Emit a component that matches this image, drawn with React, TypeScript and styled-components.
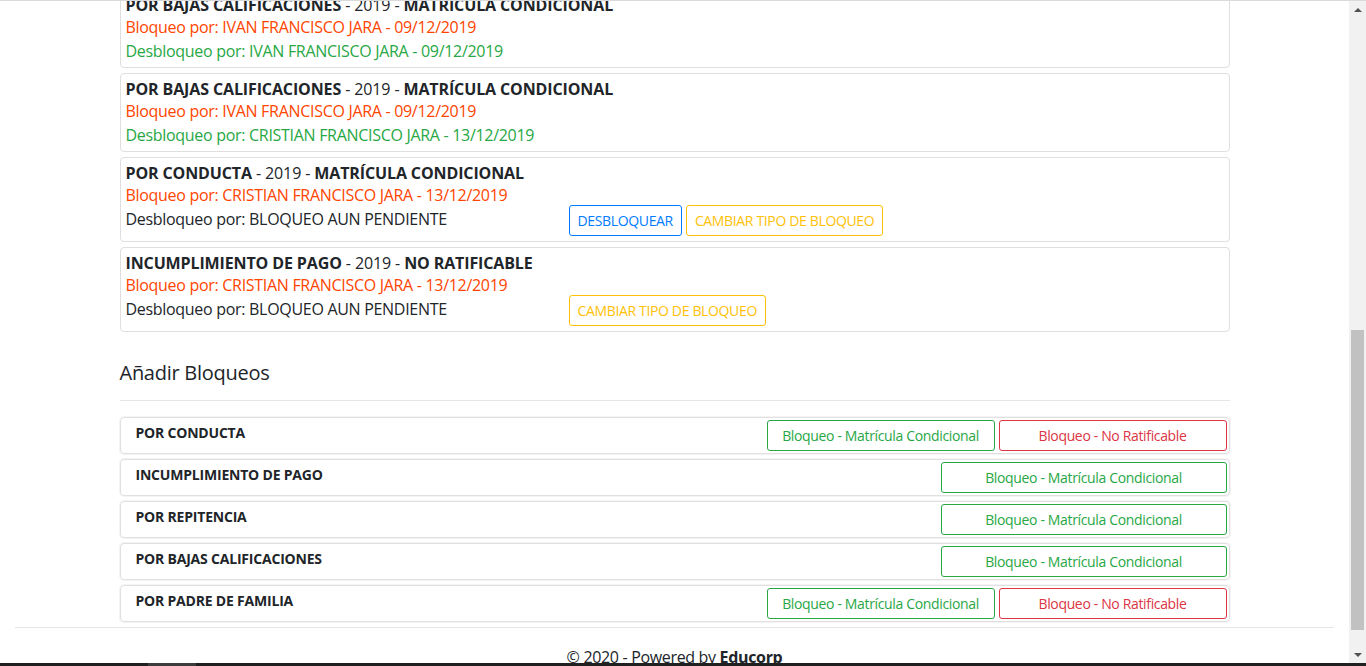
import React from 'react';
import styled, { createGlobalStyle } from 'styled-components';

const FONT = '"Open Sans", "Noto Sans", "DejaVu Sans", sans-serif';

const COLORS = {
    text: '#212529',
    red: '#ff4500',
    green: '#28a745',
    border: '#dfdfdf',
};

const BUTTON_COLORS = {
    primary: '#007bff',
    warning: '#ffc107',
    success: '#28a745',
    danger: '#dc3545',
};

type Variant = keyof typeof BUTTON_COLORS;

const GlobalStyle = createGlobalStyle`
    html, body {
        margin: 0;
        padding: 0;
        overflow: hidden;
        background: #fff;
    }
    body {
        font-family: ${FONT};
        font-size: 16px;
        line-height: 1.5;
        letter-spacing: -0.3px;
        color: ${COLORS.text};
    }
    * {
        box-sizing: border-box;
    }
`;

const Screen = styled.div`
    display: flex;
    flex-direction: column;
    height: 666px;
    overflow: hidden;
`;

const Viewport = styled.div`
    flex: 1;
    display: flex;
    min-height: 0;
    border-top: 1px solid #dadada;
`;

const Page = styled.div`
    flex: 1;
    min-width: 0;
    overflow: hidden;
`;

// page is scrolled: first card starts above the fold
const Scrolled = styled.div`
    margin-top: -12px;
`;

const Container = styled.div`
    max-width: 1140px;
    margin: 0 auto;
    padding: 0 15px;
`;

const Card = styled.div`
    border: 1px solid ${COLORS.border};
    border-radius: 4px;
    padding: 5px 5px 4px;
    margin-bottom: 5px;
`;

const Title = styled.div`
    line-height: 20px;
    font-size: 16px;
    letter-spacing: -0.12px;
    text-transform: uppercase;

    b {
        font-weight: 700;
    }
`;

const Line = styled.div<{ tone?: 'red' | 'green' }>`
    line-height: 24px;
    color: ${props => (props.tone ? COLORS[props.tone] : COLORS.text)};
`;

const ActionRow = styled.div`
    display: grid;
    grid-template-columns: 443px 1fr;
    align-items: start;
`;

const ButtonGroup = styled.div<{ offset?: boolean }>`
    display: flex;
    gap: 4px;
    margin: ${props => (props.offset ? '-2px 0 1px' : '0')};
`;

const Button = styled.button<{ variant: Variant; width?: number }>`
    font-family: ${FONT};
    font-size: 14px;
    line-height: 21px;
    letter-spacing: -0.35px;
    padding: 4px 8px;
    border: 1px solid ${props => BUTTON_COLORS[props.variant]};
    border-radius: 3px;
    background: transparent;
    color: ${props => BUTTON_COLORS[props.variant]};
    width: ${props => (props.width ? `${props.width}px` : 'auto')};
    text-align: center;
    white-space: nowrap;
    cursor: pointer;
`;

const SectionTitle = styled.h5`
    margin: 29px 0 0;
    font-size: 20px;
    font-weight: 400;
    line-height: 24px;
    letter-spacing: -0.27px;
`;

const Divider = styled.hr`
    margin: 15px 0 16px;
    border: 0;
    border-top: 1px solid #e5e5e5;
`;

const AddRow = styled.div`
    display: flex;
    justify-content: space-between;
    align-items: flex-start;
    border: 1px solid #e0e0e0;
    box-shadow: 0 0 0 1px #f4f4f4;
    border-radius: 4px;
    padding: 2px 2px 2px 15px;
    margin-bottom: 5px;
`;

const AddLabel = styled.div`
    font-size: 14px;
    font-weight: 700;
    line-height: 21px;
    letter-spacing: -0.2px;
    padding-top: 2px;
`;

const Footer = styled.footer`
    margin: 5px 15px 0;
    border-top: 1px solid #e5e5e5;
    padding-top: 17px;
    text-align: center;
    line-height: 24px;
    letter-spacing: -0.33px;

    b {
        font-weight: 700;
    }
`;

const Scrollbar = styled.div`
    width: 17px;
    display: flex;
    flex-direction: column;
    background: #f1f1f1;
`;

const ArrowButton = styled.div<{ dir: 'up' | 'down' }>`
    height: 17px;
    display: flex;
    align-items: center;
    justify-content: center;

    &::before {
        content: '';
        width: 0;
        height: 0;
        border-left: 4px solid transparent;
        border-right: 4px solid transparent;
        ${props =>
            props.dir === 'up'
                ? 'border-bottom: 4px solid #505050;'
                : 'border-top: 4px solid #505050;'}
    }
`;

const Track = styled.div`
    flex: 1;
    padding: 0 2px;
`;

const Thumb = styled.div`
    margin-top: 312px;
    height: 300px;
    background: #c1c1c1;
`;

const TaskStrip = styled.div`
    height: 3px;
    background: #202020;
    display: flex;
`;

const TaskItem = styled.div`
    margin-left: 148px;
    width: 48px;
    background: #3c3c3c;
`;

type Block = {
    reason: string;
    year: string;
    kind: string;
    blockedBy: string;
    unblockedBy?: string;
    canUnblock?: boolean;
};

const BLOCKS: Block[] = [
    {
        reason: 'POR BAJAS CALIFICACIONES',
        year: '2019',
        kind: 'MATRÍCULA CONDICIONAL',
        blockedBy: 'IVAN FRANCISCO JARA - 09/12/2019',
        unblockedBy: 'IVAN FRANCISCO JARA - 09/12/2019',
    },
    {
        reason: 'POR BAJAS CALIFICACIONES',
        year: '2019',
        kind: 'MATRÍCULA CONDICIONAL',
        blockedBy: 'IVAN FRANCISCO JARA - 09/12/2019',
        unblockedBy: 'CRISTIAN FRANCISCO JARA - 13/12/2019',
    },
    {
        reason: 'POR CONDUCTA',
        year: '2019',
        kind: 'MATRÍCULA CONDICIONAL',
        blockedBy: 'CRISTIAN FRANCISCO JARA - 13/12/2019',
        canUnblock: true,
    },
    {
        reason: 'INCUMPLIMIENTO DE PAGO',
        year: '2019',
        kind: 'NO RATIFICABLE',
        blockedBy: 'CRISTIAN FRANCISCO JARA - 13/12/2019',
    },
];

const ADD_OPTIONS: { label: string; noRatificable: boolean }[] = [
    { label: 'POR CONDUCTA', noRatificable: true },
    { label: 'INCUMPLIMIENTO DE PAGO', noRatificable: false },
    { label: 'POR REPITENCIA', noRatificable: false },
    { label: 'POR BAJAS CALIFICACIONES', noRatificable: false },
    { label: 'POR PADRE DE FAMILIA', noRatificable: true },
];

const BlockCard = ({ block }: { block: Block }) => (
    <Card>
        <Title>
            <b>{block.reason}</b> - {block.year} - <b>{block.kind}</b>
        </Title>
        <Line tone="red">Bloqueo por: {block.blockedBy}</Line>
        {block.unblockedBy ? (
            <Line tone="green">Desbloqueo por: {block.unblockedBy}</Line>
        ) : (
            <ActionRow>
                <Line>Desbloqueo por: BLOQUEO AUN PENDIENTE</Line>
                <ButtonGroup offset>
                    {block.canUnblock && <Button variant="primary">DESBLOQUEAR</Button>}
                    <Button variant="warning">CAMBIAR TIPO DE BLOQUEO</Button>
                </ButtonGroup>
            </ActionRow>
        )}
    </Card>
);

const App = () => (
    <Screen>
        <GlobalStyle />
        <Viewport>
            <Page>
                <Scrolled>
                    <Container>
                        {BLOCKS.map((block, i) => (
                            <BlockCard key={i} block={block} />
                        ))}

                        <SectionTitle>Añadir Bloqueos</SectionTitle>
                        <Divider />

                        {ADD_OPTIONS.map(option => (
                            <AddRow key={option.label}>
                                <AddLabel>{option.label}</AddLabel>
                                <ButtonGroup>
                                    <Button
                                        variant="success"
                                        width={option.noRatificable ? 228 : 286}
                                    >
                                        Bloqueo - Matrícula Condicional
                                    </Button>
                                    {option.noRatificable && (
                                        <Button variant="danger" width={228}>
                                            Bloqueo - No Ratificable
                                        </Button>
                                    )}
                                </ButtonGroup>
                            </AddRow>
                        ))}
                    </Container>
                    <Footer>
                        © 2020 - Powered by <b>Educorp</b>
                    </Footer>
                </Scrolled>
            </Page>
            <Scrollbar>
                <ArrowButton dir="up" />
                <Track>
                    <Thumb />
                </Track>
                <ArrowButton dir="down" />
            </Scrollbar>
        </Viewport>
        <TaskStrip>
            <TaskItem />
        </TaskStrip>
    </Screen>
);

export default App;
